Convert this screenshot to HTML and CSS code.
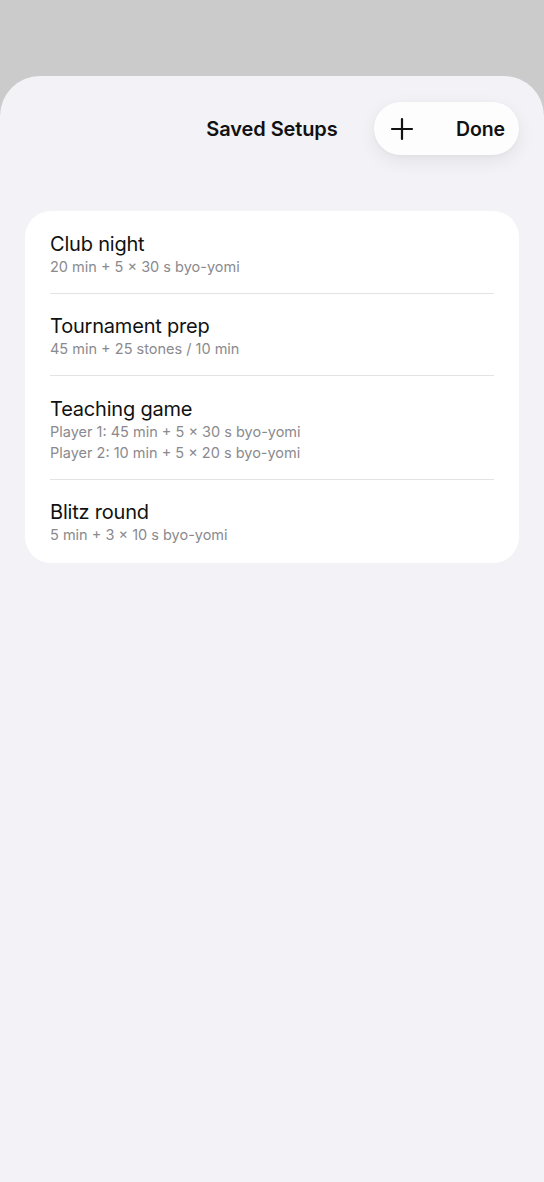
FILE: index.html
```html
<!DOCTYPE html>
<html lang="en">
<head>
<meta charset="utf-8">
<title>Saved Setups</title>
<link rel="stylesheet" href="styles.css">
</head>
<body>
<div class="sheet">
  <header class="nav">
    <div></div>
    <h1 class="nav-title">Saved Setups</h1>
    <div class="pill">
      <button class="pill-btn add" aria-label="Add">
        <svg width="24" height="24" viewBox="0 0 24 24"><path d="M12 2v20M2 12h20" stroke="#111" stroke-width="2.2" stroke-linecap="round" fill="none"/></svg>
      </button>
      <button class="pill-btn done">Done</button>
    </div>
  </header>
  <ul class="card">
    <li class="row">
      <div class="row-title">Club night</div>
      <div class="row-sub">20 min + 5 × 30 s byo-yomi</div>
    </li>
    <li class="row">
      <div class="row-title">Tournament prep</div>
      <div class="row-sub">45 min + 25 stones / 10 min</div>
    </li>
    <li class="row">
      <div class="row-title">Teaching game</div>
      <div class="row-sub">Player 1: 45 min + 5 × 30 s byo-yomi</div>
      <div class="row-sub">Player 2: 10 min + 5 × 20 s byo-yomi</div>
    </li>
    <li class="row">
      <div class="row-title">Blitz round</div>
      <div class="row-sub">5 min + 3 × 10 s byo-yomi</div>
    </li>
  </ul>
</div>
</body>
</html>
```
FILE: styles.css
```css
* { box-sizing: border-box; }
html, body { margin: 0; padding: 0; }
body {
  background: #cbcbcb;
  font-family: Inter, "Noto Sans", "Liberation Sans", sans-serif;
  color: #111;
  height: 1182px;
  overflow: hidden;
}
.sheet {
  margin-top: 76px;
  height: 1106px;
  background: #f2f2f7;
  border-radius: 40px 40px 0 0;
  padding: 26px 25px 0;
}
.nav {
  display: grid;
  grid-template-columns: 1fr auto 1fr;
  align-items: center;
  height: 53px;
}
.nav-title {
  margin: 0;
  font-size: 20px;
  font-weight: 600;
  letter-spacing: -0.1px;
  text-align: center;
}
.pill {
  justify-self: end;
  display: flex;
  align-items: center;
  height: 53px;
  width: 145px;
  background: #fdfdfe;
  border-radius: 27px;
  box-shadow: 0 6px 18px rgba(0,0,0,0.07), 0 1px 4px rgba(0,0,0,0.03);
  padding: 0 14px 0 16px;
}
.pill-btn {
  border: 0;
  background: none;
  padding: 0;
  font: inherit;
  color: #111;
  display: flex;
  align-items: center;
}
.add { width: 24px; height: 24px; }
.done {
  margin-left: auto;
  font-size: 19.5px;
  font-weight: 600;
  letter-spacing: -0.1px;
}
.card {
  list-style: none;
  margin: 56px 0 0;
  padding: 0 25px;
  background: #fff;
  border-radius: 26px;
}
.row {
  padding: 20.5px 0 16px;
  display: flex;
  flex-direction: column;
  gap: 1px;
  border-bottom: 1px solid #e3e3e6;
}
.row:last-child { border-bottom: 0; padding-bottom: 17.5px; }
.row-title {
  font-size: 20px;
  line-height: 24px;
  letter-spacing: -0.2px;
}
.row-sub {
  font-size: 14.5px;
  line-height: 20px;
  color: #8a8a8e;
}
```
